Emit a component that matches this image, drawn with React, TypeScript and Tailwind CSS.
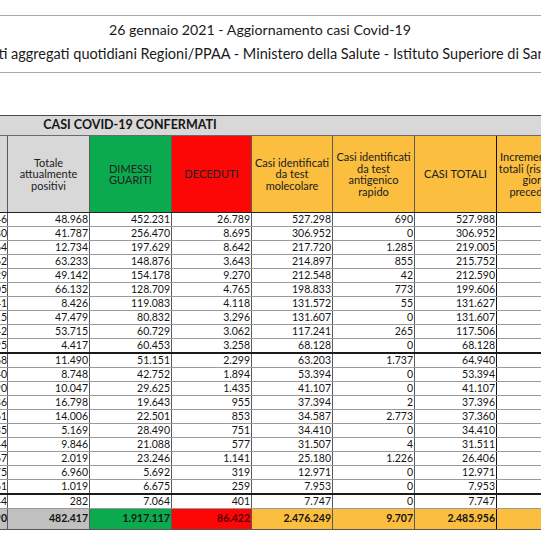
import React from "react";

const rows: string[][] = [
  ["45.546", "48.968", "452.231", "26.789", "527.298", "690", "527.988"],
  ["30.880", "41.787", "256.470", "8.695", "306.952", "0", "306.952"],
  ["11.964", "12.734", "197.629", "8.642", "217.720", "1.285", "219.005"],
  ["60.062", "63.233", "148.876", "3.643", "214.897", "855", "215.752"],
  ["46.329", "49.142", "154.178", "9.270", "212.548", "42", "212.590"],
  ["62.505", "66.132", "128.709", "4.765", "198.833", "773", "199.606"],
  ["7.741", "8.426", "119.083", "4.118", "131.572", "55", "131.627"],
  ["45.215", "47.479", "80.832", "3.296", "131.607", "0", "131.607"],
  ["51.242", "53.715", "60.729", "3.062", "117.241", "265", "117.506"],
  ["4.095", "4.417", "60.453", "3.258", "68.128", "0", "68.128"],
  ["10.868", "11.490", "51.151", "2.299", "63.203", "1.737", "64.940"],
  ["8.340", "8.748", "42.752", "1.894", "53.394", "0", "53.394"],
  ["9.390", "10.047", "29.625", "1.435", "41.107", "0", "41.107"],
  ["15.986", "16.798", "19.643", "955", "37.394", "2", "37.396"],
  ["13.461", "14.006", "22.501", "853", "34.587", "2.773", "37.360"],
  ["4.835", "5.169", "28.490", "751", "34.410", "0", "34.410"],
  ["9.544", "9.846", "21.088", "577", "31.507", "4", "31.511"],
  ["1.867", "2.019", "23.246", "1.141", "25.180", "1.226", "26.406"],
  ["6.375", "6.960", "5.692", "319", "12.971", "0", "12.971"],
  ["961", "1.019", "6.675", "259", "7.953", "0", "7.953"],
  ["244", "282", "7.064", "401", "7.747", "0", "7.747"],
];

const total = ["452.290", "482.417", "1.917.117", "86.422", "2.476.249", "9.707", "2.485.956"];

const widths = ["w-[8px]", "w-[82px]", "w-[82px]", "w-[80px]", "w-[81px]", "w-[82px]", "w-[82px]", "w-[82px]"];

const vline = (i: number) =>
  i === 6 ? "border-r border-r-[#111]" : i === 7 ? "" : "border-r border-r-[#5a5a5a]";

export default function App() {
  return (
    <div
      className="w-[541px] h-[541px] overflow-hidden bg-white text-[#141414]"
      style={{ fontFamily: "Lato, 'Open Sans', sans-serif" }}
    >
      <div className="h-[16px] border-b border-b-[#a8a8a8]" />
      <div className="h-[57px] border-b border-b-[#a8a8a8] flex flex-col">
        <div className="h-[26px] w-[520px] pt-[5px] flex justify-center whitespace-nowrap text-[14.2px] leading-[18px] text-[#1a1a1a]">
          <span className="shrink-0">26 gennaio 2021 - Aggiornamento casi Covid-19</span>
        </div>
        <div className="flex justify-center w-[542px] whitespace-nowrap text-[14.5px] leading-[18px] text-[#1a1a1a] pt-[3px]">
          <span className="shrink-0">Dati aggregati quotidiani Regioni/PPAA - Ministero della Salute - Istituto Superiore di Sanità</span>
        </div>
      </div>
      <div className="h-[43px] border-b border-b-[#4a4a4a]" />

      <div className="w-[579px]">
        <div className="h-[20px] bg-[#d8d8d8] border-b border-b-[#6a6a6a] flex">
          <div className="w-[8px] border-r border-r-[#d8d8d8]" />
          <div className="w-[244px] flex justify-center items-center text-[12.5px] font-bold text-[#151515] leading-none">
            CASI COVID-19 CONFERMATI
          </div>
        </div>

        <div className="h-[77px] flex border-b border-b-[#222] text-[11px] leading-[11.5px] text-[#202020] text-center">
          <div className={`${widths[0]} bg-[#d8d8d8] ${vline(0)}`} />
          <div className={`${widths[1]} bg-[#d8d8d8] ${vline(1)} flex items-center justify-center`}>
            <span>Totale<br />attualmente<br />positivi</span>
          </div>
          <div className={`${widths[2]} bg-[#0caa4f] ${vline(2)} flex items-center justify-center`}>
            <span>DIMESSI<br />GUARITI</span>
          </div>
          <div className={`${widths[3]} bg-[#fc0606] ${vline(3)} flex items-center justify-center`}>
            <span>DECEDUTI</span>
          </div>
          <div className={`${widths[4]} bg-[#fbbe3e] ${vline(4)} flex items-center justify-center whitespace-nowrap`}>
            <span>Casi identificati<br />da test<br />molecolare</span>
          </div>
          <div className={`${widths[5]} bg-[#fbbe3e] ${vline(5)} flex items-center justify-center whitespace-nowrap`}>
            <span>Casi identificati<br />da test<br />antigenico<br />rapido</span>
          </div>
          <div className={`${widths[6]} bg-[#fbbe3e] ${vline(6)} flex items-center justify-center`}>
            <span>CASI TOTALI</span>
          </div>
          <div className={`${widths[7]} bg-[#fbbe3e] flex items-center justify-center whitespace-nowrap`}>
            <span>Incremento casi<br />totali (rispetto al<br />giorno<br />precedente)</span>
          </div>
        </div>

        {rows.map((r, ri) => {
          const dark = ri === 9 || ri === 19;
          return (
            <div
              key={ri}
              className={`flex ${dark ? "h-[15px] border-b-2 border-b-[#1a1a1a]" : "h-[14px] border-b border-b-[#9a9a9a]"} text-[10.5px] leading-[13px]`}
            >
              {[...r, ""].map((v, ci) => (
                <div
                  key={ci}
                  className={`${widths[ci]} ${vline(ci)} flex justify-end items-center overflow-hidden whitespace-nowrap ${ci === 0 ? "pr-0" : "pr-[1px]"}`}
                >
                  <span className="shrink-0">{v}</span>
                </div>
              ))}
            </div>
          );
        })}

        <div className="flex h-[21px] border-b border-b-[#555] text-[10.5px] font-bold text-[#141414]">
          {[...total, ""].map((v, ci) => {
            const bg =
              ci <= 1 ? "bg-[#c0c0c0]" : ci === 2 ? "bg-[#0caa4f]" : ci === 3 ? "bg-[#fc0606]" : "bg-[#fbbe3e]";
            return (
              <div
                key={ci}
                className={`${widths[ci]} ${bg} ${vline(ci)} flex justify-end items-center overflow-hidden whitespace-nowrap ${ci === 0 ? "pr-0" : "pr-[1px]"} ${ci === 3 ? "text-[#5a0000]" : ""}`}
              >
                <span className="shrink-0">{v}</span>
              </div>
            );
          })}
        </div>
      </div>
    </div>
  );
}
